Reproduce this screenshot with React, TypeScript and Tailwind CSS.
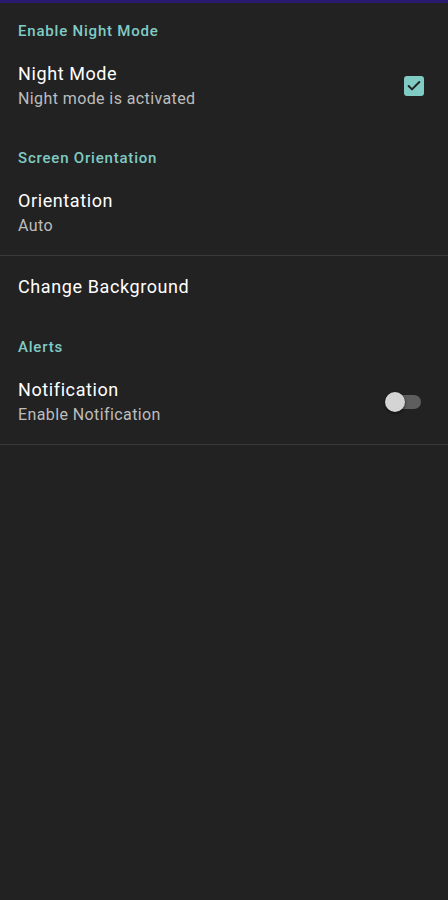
import { Check } from 'lucide-react';

function Category({ title, top = 'pt-[19px]' }: { title: string; top?: string }) {
    return (
        <div className={`px-[18px] ${top} text-[15px] leading-[22px] font-medium tracking-[0.8px] text-[#80cbc4]`}>
            {title}
        </div>
    );
}

function Item({
    title,
    summary,
    right,
    top = 'pt-[20px]',
}: {
    title: string;
    summary?: string;
    right?: React.ReactNode;
    top?: string;
}) {
    return (
        <div className={`flex items-center pl-[18px] pr-[24px] pb-[18px] ${top}`}>
            <div className="flex-1">
                <div className="text-[18px] leading-[24px] tracking-[0.6px] text-white">{title}</div>
                {summary && (
                    <div className="mt-[2px] text-[16px] leading-[22px] tracking-[0.4px] text-[#bdbdbd]">
                        {summary}
                    </div>
                )}
            </div>
            {right}
        </div>
    );
}

export default function App() {
    return (
        <div className="min-h-[900px] w-full bg-[#222222] font-['Roboto',sans-serif]">
            <div className="h-[3px] bg-[#2a1a6e]" />

            <Category title="Enable Night Mode" top="pt-[17px]" />
            <Item
                title="Night Mode"
                summary="Night mode is activated"
                right={
                    <div className="flex h-[20px] w-[20px] items-center justify-center rounded-[3px] bg-[#80cbc4]">
                        <Check className="h-[16px] w-[16px] text-[#222222]" strokeWidth={3} />
                    </div>
                }
            />

            <Category title="Screen Orientation" />
            <Item title="Orientation" summary="Auto" />
            <div className="h-[1px] bg-[#3a3a3a]" />
            <Item title="Change Background" top="pt-[19px]" />

            <Category title="Alerts" />
            <Item
                title="Notification"
                summary="Enable Notification"
                right={
                    <div className="relative mr-[3px] h-[14px] w-[34px] rounded-full bg-[#5e5e5e]">
                        <div className="absolute -left-[2px] -top-[3px] h-[20px] w-[20px] rounded-full bg-[#d4d4d4] shadow-[0_1px_3px_rgba(0,0,0,0.7)]" />
                    </div>
                }
            />
            <div className="h-[1px] bg-[#3a3a3a]" />
        </div>
    );
}
